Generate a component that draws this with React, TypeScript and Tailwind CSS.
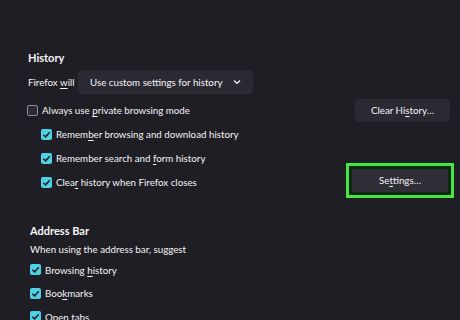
import React from "react";

function Check({ checked }: { checked: boolean }) {
  if (!checked)
    return (
      <span className="inline-block w-[11px] h-[11px] rounded-[2px] border border-[#8f8f9d] bg-[#2b2a33] shrink-0" />
    );
  return (
    <span className="inline-flex items-center justify-center w-[11px] h-[11px] rounded-[2px] bg-[#4fd1e3] shrink-0">
      <svg width="9" height="9" viewBox="0 0 10 10">
        <path d="M1.5 5.2 L4 7.6 L8.6 2.4" fill="none" stroke="#1c1b22" strokeWidth="1.6" />
      </svg>
    </span>
  );
}

function U({ children }: { children: React.ReactNode }) {
  return <span className="underline underline-offset-2 decoration-1">{children}</span>;
}

function Row({
  checked,
  children,
  indent,
  h = "h-[24px]",
}: {
  checked: boolean;
  children: React.ReactNode;
  indent?: boolean;
  h?: string;
}) {
  return (
    <div className={`flex items-center gap-[4px] ${h} ${indent ? "pl-[14px]" : ""}`}>
      <Check checked={checked} />
      <span className="whitespace-nowrap">{children}</span>
    </div>
  );
}

export default function App() {
  return (
    <div
      className="w-[460px] h-[320px] overflow-hidden bg-[#1f1e25] text-[#f4f4f6] text-[9.75px] leading-[14px]"
      style={{ fontFamily: 'Lato, "Open Sans", sans-serif' }}
    >
      <div className="pl-[27px] pr-[10px] pt-[49px]">
        <div className="text-[11px] font-bold leading-[18px] pl-[1px]">History</div>
        <div className="flex items-center mt-[3px] h-[24px]">
          <span className="w-[51px] whitespace-nowrap pl-[1px]">
            Firefox <U>w</U>ill
          </span>
          <div className="flex items-center h-[24px] w-[175px] rounded-[4px] bg-[#2b2a33] pl-[12px] pr-[12px] justify-between">
            <span className="whitespace-nowrap">Use custom settings for history</span>
            <svg width="8" height="6" viewBox="0 0 8 6">
              <path d="M1 1.5 L4 4.5 L7 1.5" fill="none" stroke="#f4f4f6" strokeWidth="1.2" />
            </svg>
          </div>
        </div>
        <div className="flex items-center justify-between mt-[4px] h-[24px]">
          <Row checked={false}>
            Always use <U>p</U>rivate browsing mode
          </Row>
          <div className="flex items-center justify-center w-[95px] h-[23px] rounded-[4px] bg-[#2b2a33] whitespace-nowrap">
            Clear Hi<U>s</U>tory…
          </div>
        </div>
        <Row checked indent>
          Remem<U>b</U>er browsing and download history
        </Row>
        <Row checked indent>
          Remember search and <U>f</U>orm history
        </Row>
        <div className="flex items-center justify-between h-[24px]">
          <Row checked indent>
            Clea<U>r</U> history when Firefox closes
          </Row>
          <div className="mr-[-5px] -mt-[4px] p-[1px] bg-[#0b2a0b] rounded-[2px]">
            <div className="border-[3px] border-[#4ce04c] p-[3px]">
              <div className="flex items-center justify-center w-[96px] h-[23px] bg-[#2f2e36] whitespace-nowrap">
                Se<U>t</U>tings…
              </div>
            </div>
          </div>
        </div>
        <div className="pl-[3px]">
          <div className="text-[11px] font-bold leading-[18px] mt-[28px]">Address Bar</div>
          <div className="h-[18px] flex items-center whitespace-nowrap">When using the address bar, suggest</div>
          <Row checked h="h-[23.5px]">
            Browsing <U>h</U>istory
          </Row>
          <Row checked h="h-[23.5px]">
            Boo<U>k</U>marks
          </Row>
          <Row checked h="h-[23.5px]">
            <U>O</U>pen tabs
          </Row>
        </div>
      </div>
    </div>
  );
}
